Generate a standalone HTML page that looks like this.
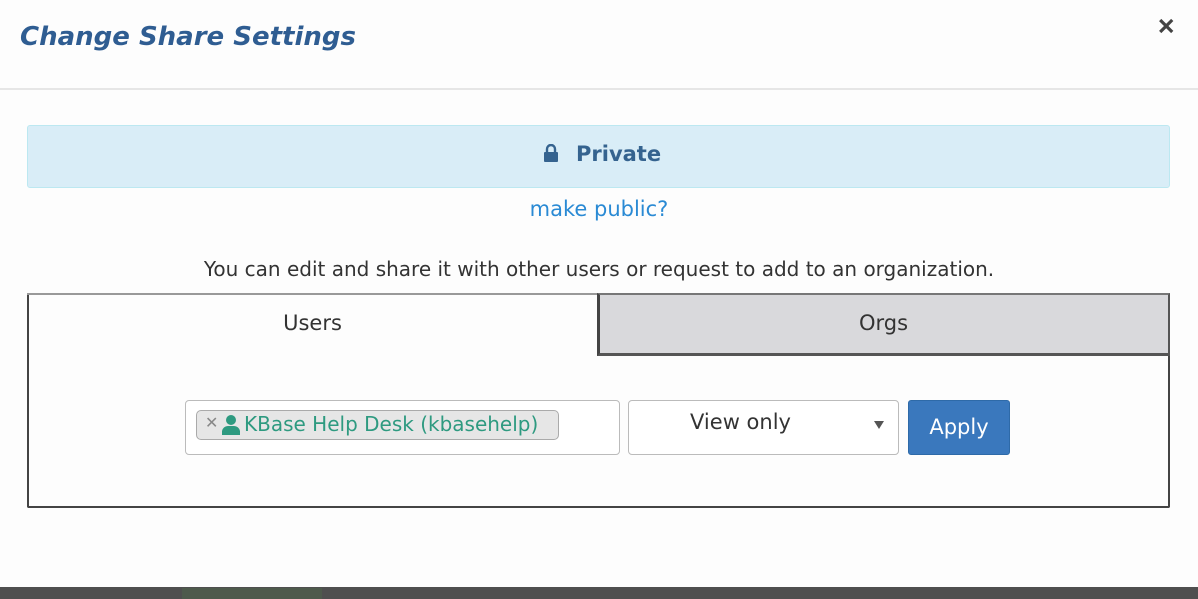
<!DOCTYPE html>
<html><head><style>
*{box-sizing:border-box;margin:0;padding:0}
body{width:1198px;height:599px;background:#fdfdfd;font-family:"DejaVu Sans","Liberation Sans",sans-serif;position:relative;overflow:hidden;color:#333}
.a{position:absolute}
</style></head><body>
<div class="a" style="left:20px;top:22px;font-size:26px;font-weight:bold;font-style:italic;color:#2f5d92">Change Share Settings</div>
<div class="a" style="left:1157px;top:15px;font-size:22px;font-weight:bold;color:#444;-webkit-text-stroke:1px #444">✕</div>
<div class="a" style="left:0;top:88px;width:1198px;height:2px;background:#e6e6e6"></div>
<div class="a" style="left:27px;top:125px;width:1143px;height:63px;background:#d9edf7;border:1px solid #bce8f1;border-radius:3px"></div>
<svg class="a" style="left:543px;top:144px" width="16" height="18" viewBox="0 0 16 18"><path d="M4 8V5a4 4 0 0 1 8 0v3" fill="none" stroke="#35638f" stroke-width="2.4"/><rect x="1" y="8" width="14" height="10" rx="1" fill="#35638f"/></svg>
<div class="a" style="left:576px;top:142px;font-size:21px;font-weight:bold;color:#35638f">Private</div>
<div class="a" style="left:0;width:1198px;top:197px;text-align:center;font-size:21px;color:#2a8ad4">make public?</div>
<div class="a" style="left:0;width:1198px;top:257px;text-align:center;font-size:20px;color:#333">You can edit and share it with other users or request to add to an organization.</div>
<div class="a" style="left:27px;top:293px;width:1143px;height:215px;border:2px solid #444;border-top:none;border-radius:0 0 2px 2px"></div>
<div class="a" style="left:27px;top:293px;width:572px;height:2px;background:#999"></div>
<div class="a" style="left:597px;top:293px;width:573px;height:63px;background:#d9d9dc;border-top:2px solid #777;border-left:3px solid #444;border-bottom:3px solid #555;border-right:2px solid #555"></div>
<div class="a" style="left:27px;width:571px;top:311px;text-align:center;font-size:21px">Users</div>
<div class="a" style="left:598px;width:571px;top:311px;text-align:center;font-size:21px">Orgs</div>
<div class="a" style="left:185px;top:400px;width:435px;height:55px;border:1px solid #bbb;border-radius:4px;background:#fff"></div>
<div class="a" style="left:196px;top:410px;width:363px;height:30px;border:1px solid #aaa;border-radius:5px;background:#e6e6e6"></div>
<div class="a" style="left:205px;top:413px;font-size:16px;font-weight:bold;color:#888">✕</div>
<svg class="a" style="left:222px;top:414px" width="18" height="21" viewBox="0 0 18 21"><circle cx="9" cy="6" r="5" fill="#2e9a80"/><path d="M0 21v-4a6 6 0 0 1 6-5h6a6 6 0 0 1 6 5v4z" fill="#2e9a80"/></svg>
<div class="a" style="left:244px;top:412px;font-size:20px;color:#2e9a80">KBase Help Desk (kbasehelp)</div>
<div class="a" style="left:628px;top:400px;width:271px;height:55px;border:1px solid #bbb;border-radius:4px;background:#fff"></div>
<div class="a" style="left:628px;width:225px;top:410px;text-align:center;font-size:21px;color:#333">View only</div>
<div class="a" style="left:874px;top:421px;width:0;height:0;border-left:5px solid transparent;border-right:5px solid transparent;border-top:8px solid #555"></div>
<div class="a" style="left:908px;top:400px;width:102px;height:55px;background:#3a78bd;border:1px solid #2e6aa8;border-radius:3px;color:#fff;font-size:21px;text-align:center;line-height:52px">Apply</div>
<div class="a" style="left:0;top:587px;width:1198px;height:12px;background:#4f4f4f"></div>
<div class="a" style="left:182px;top:588px;width:140px;height:11px;background:#4e5a4c"></div>
</body></html>
